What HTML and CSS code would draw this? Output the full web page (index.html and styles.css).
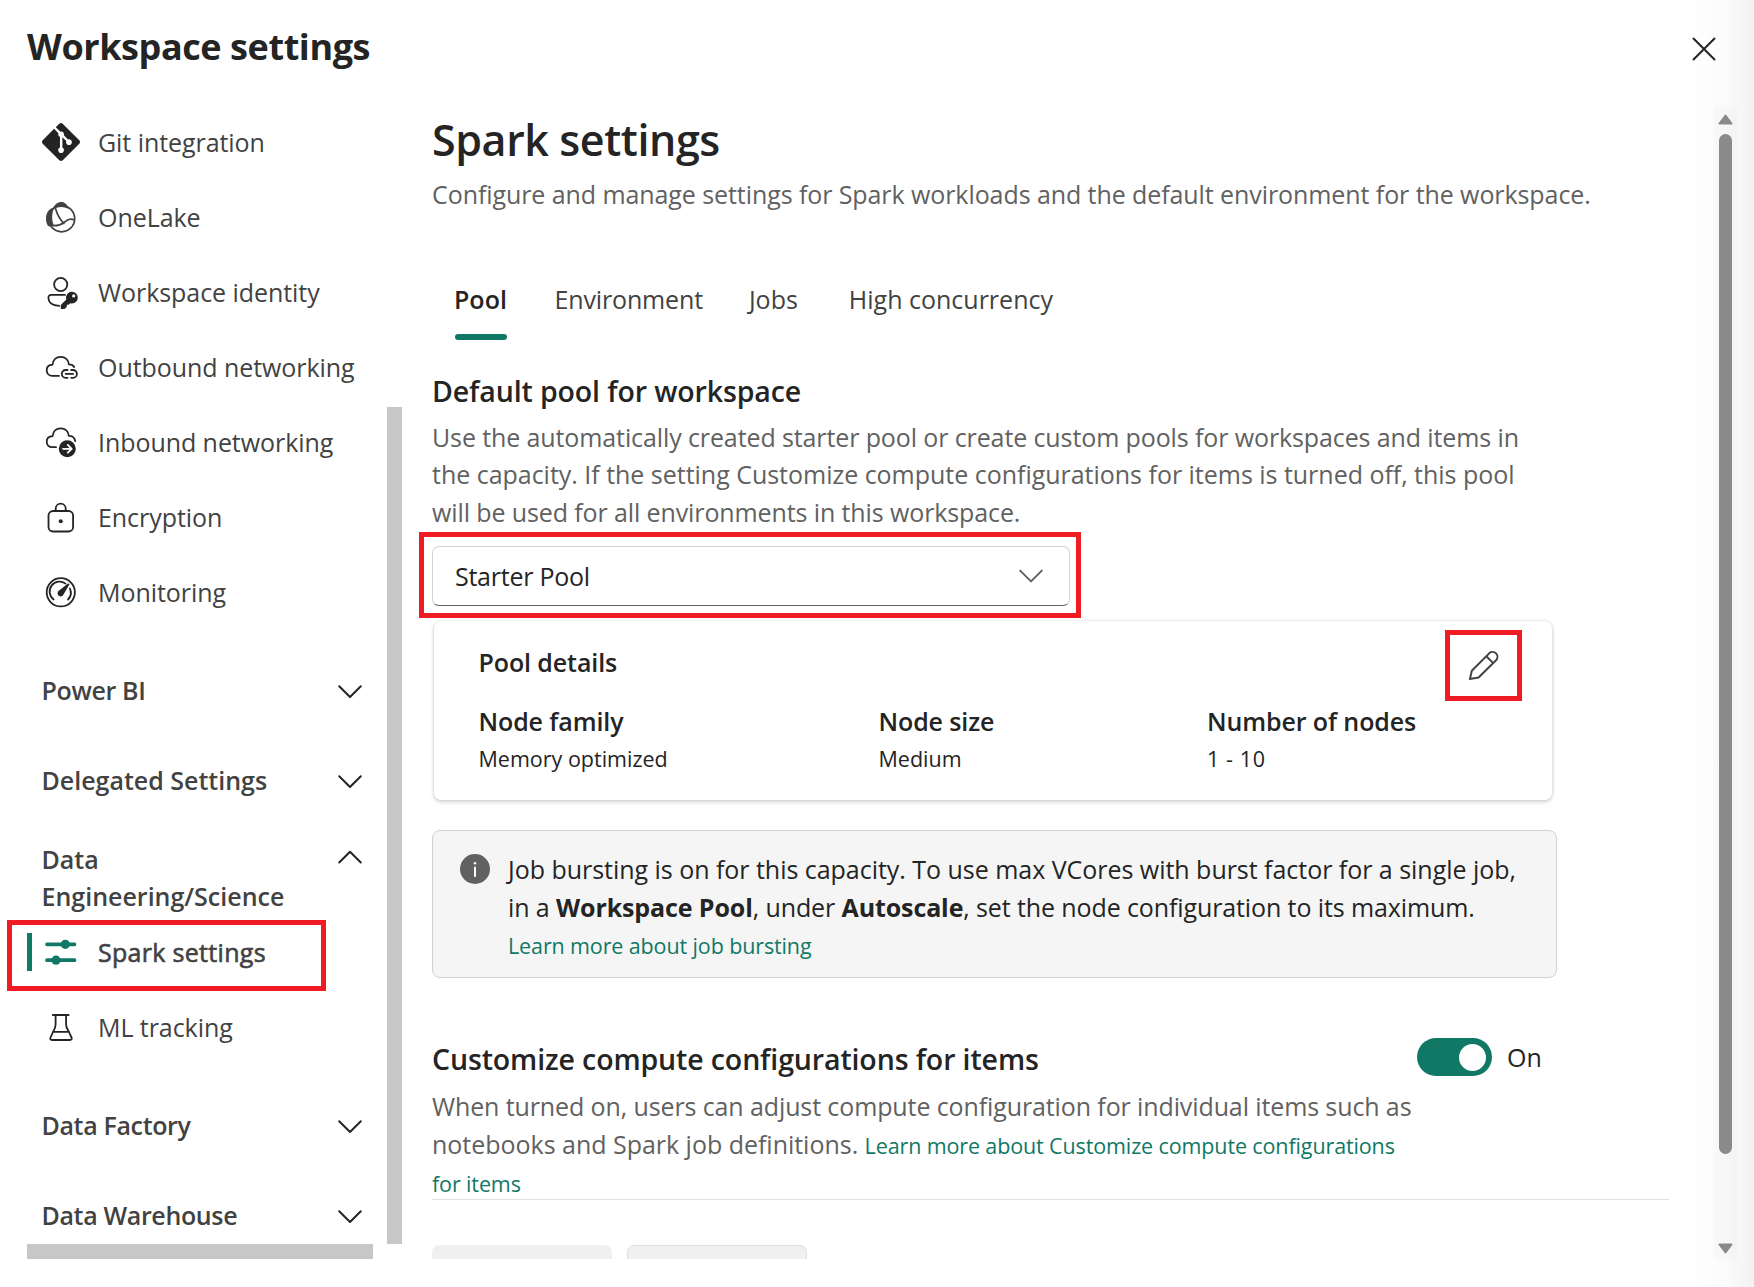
FILE: index.html
```html
<!DOCTYPE html>
<html lang="en">
<head>
<meta charset="utf-8">
<title>Workspace settings</title>
<link rel="stylesheet" href="styles.css">
</head>
<body>
<div class="panel">
  <header class="panel-header">
    <h1 class="panel-title">Workspace settings</h1>
    <svg class="close" viewBox="0 0 24 24"><path d="M1.5 1.5l21 21M22.5 1.5l-21 21"/></svg>
  </header>

  <div class="panel-body">
    <aside class="sidebar">
      <div class="nav-column">
        <nav class="nav">
          <a class="item"><svg class="icon git" viewBox="0 0 24 24"><path class="solid" d="M23.546 10.93L13.067.452c-.604-.603-1.582-.603-2.188 0L8.708 2.627l2.76 2.76c.645-.215 1.379-.07 1.889.441.516.515.658 1.258.438 1.9l2.658 2.66c.645-.223 1.387-.078 1.9.435.721.72.721 1.884 0 2.604-.719.719-1.881.719-2.6 0-.539-.541-.674-1.337-.404-1.996L12.86 8.955v6.525c.176.086.342.203.488.348.713.721.713 1.883 0 2.6-.719.721-1.889.721-2.609 0-.719-.719-.719-1.879 0-2.598.182-.18.387-.316.605-.406V8.835c-.217-.091-.424-.222-.6-.401-.545-.545-.676-1.342-.396-2.009L7.636 3.7.45 10.881c-.6.605-.6 1.584 0 2.189l10.48 10.477c.604.604 1.582.604 2.186 0l10.43-10.43c.605-.603.605-1.582 0-2.187"/></svg>Git integration</a>
          <a class="item"><svg class="icon lake" viewBox="0 0 38 38"><path class="fill" d="M11 9C13.5 4.5 16.5 3 19.5 3S25 5 27 10C22 7.5 16 7 11 10.5Z"/><path class="fill" d="M12.5 8.5C7 9 4 14 4 19.500C4 23.500 5 26 7 27.500L12 26.300C9.500 22 9.500 13.500 12.500 8.500Z"/><circle cx="19.600" cy="19.700" r="13.100"/><path d="M13.600 9.700C15.100 15.500 17.600 20 21.900 24.300M6.500 26C12 27.300 17.500 27 22 23.500C25.500 20.800 28 19 32.300 21"/></svg>OneLake</a>
          <a class="item"><svg class="icon" viewBox="0 0 38 38"><circle cx="18.700" cy="10.500" r="6.600"/><path d="M23 20.900H9.300C7.400 20.900 6.400 22 6.400 23.700C6.400 28.800 10.500 31.500 17.200 31.900"/><path class="solid" fill-rule="evenodd" d="M29.900 17.700a5.900 5.900 0 0 1 0 11.800c-.7 0-1.200-.1-1.800-.3l-1.500 1.500h-1.800v2l-2.300 2.400h-3.300l-.4-.4v-3.800l5.500-5.500a5.900 5.900 0 0 1 5.600-7.700Zm1.800 2.600a1.600 1.600 0 1 0 0 3.200a1.600 1.600 0 0 0 0-3.200Z"/></svg>Workspace identity</a>
          <a class="item"><svg class="icon" viewBox="0 0 38 38"><path d="M17 26.800H10.300C6.800 26.800 4.700 24.200 4.700 21.200C4.700 18.100 7 15.900 10.600 15.700C11 10.900 14.200 7.900 18.700 7.900S26.400 10.900 26.800 15.400C29.300 15.400 31.300 16.300 32.200 18"/><path d="M25.500 21H23.700a3.900 3.900 0 0 0 0 7.800h1.800M29.200 21h1.800a3.900 3.900 0 0 1 0 7.800h-1.800M23.700 24.900h7.400"/></svg>Outbound networking</a>
          <a class="item"><svg class="icon" viewBox="0 0 38 38"><path d="M14 23.200H10.300C6.800 23.200 4.700 20.600 4.700 17.600C4.700 14.500 7 12.300 10.600 12.100C11 7.300 14.200 4.300 18.700 4.300S26.400 7.300 26.800 11.800C30.500 11.800 32.600 13.500 33.200 17"/><circle class="solid" cx="25.300" cy="24.800" r="8.500"/><path class="knock" d="M21 24.800h8.400M25.800 20.900l3.900 3.900l-3.900 3.900"/></svg>Inbound networking</a>
          <a class="item"><svg class="icon" viewBox="0 0 38 38"><rect x="6.500" y="12" width="24.600" height="20.500" rx="4.500"/><path d="M13.700 12V9.600a5 5 0 0 1 10 0V12"/><circle class="solid" cx="18.700" cy="22.300" r="2"/></svg>Encryption</a>
          <a class="item"><svg class="icon" viewBox="0 0 38 38"><circle cx="18.800" cy="18.300" r="14.100"/><path d="M11.600 25.500A9.900 9.900 0 0 1 23.500 9.600M27.900 14.500A9.900 9.900 0 0 1 26 25.500"/><path class="solid" d="M26.800 9.500c.6.300.7.700.4 1.300L21.500 20.500A3.100 3.100 0 1 1 16.800 16.800L25.700 9.700c.4-.3.700-.4 1.100-.2Z"/></svg>Monitoring</a>

          <div class="group"><span class="tight">Power BI</span><svg class="chevron" viewBox="0 0 30 30"><path d="M4.200 10.200L15 21L25.800 10.200"/></svg></div>
          <div class="group"><span>Delegated Settings</span><svg class="chevron" viewBox="0 0 30 30"><path d="M4.200 10.200L15 21L25.800 10.200"/></svg></div>
          <div class="group group-open"><span>Data<br>Engineering/Science</span><svg class="chevron" viewBox="0 0 30 30"><path d="M4.200 19.500L15 8.700L25.800 19.500"/></svg></div>
          <a class="item active"><svg class="icon" viewBox="0 0 38 38"><path d="M5 10.300H32.500M5 26.200H32.500"/><circle cx="23.300" cy="10.300" r="4.600"/><circle cx="14" cy="26.200" r="4.600"/></svg>Spark settings<span class="callout callout-nav"></span></a>
          <a class="item"><svg class="icon" viewBox="0 0 38 38"><path d="M10.800 6H26.600M13.600 6V15.500C13.600 19 12.200 21 11 23L8.500 28.500C7.800 30 8.600 31 10 31H28C29.400 31 30.200 30 29.500 28.500L27 23C25.600 20.500 24.100 19 24.100 15.500V6M11 22.800H27"/></svg>ML tracking</a>
          <div class="group"><span class="tight">Data Factory</span><svg class="chevron" viewBox="0 0 30 30"><path d="M4.200 10.200L15 21L25.800 10.200"/></svg></div>
          <div class="group"><span class="tight">Data Warehouse</span><svg class="chevron" viewBox="0 0 30 30"><path d="M4.200 10.200L15 21L25.800 10.200"/></svg></div>
        </nav>
        <div class="h-thumb"></div>
      </div>
      <div class="v-thumb"></div>
    </aside>

    <main class="content">
      <h2 class="page-title">Spark settings</h2>
      <p class="text lead">Configure and manage settings for Spark workloads and the default environment for the workspace.</p>

      <div class="tabs">
        <span class="tab tab-active">Pool</span>
        <span class="tab tab-env">Environment</span>
        <span class="tab">Jobs</span>
        <span class="tab tab-last">High concurrency</span>
      </div>

      <h3 class="section-title">Default pool for workspace</h3>
      <p class="text pool-text">Use the automatically created starter pool or create custom pools for workspaces and items in<br><span class="loose">the capacity. If the setting Customize compute configurations for items is turned off, this pool</span><br>will be used for all environments in this workspace.</p>

      <div class="select">
        <span class="select-value">Starter Pool</span>
        <svg class="chevron" viewBox="0 0 30 30"><path d="M4.200 9.600L15 20.400L25.800 9.600"/></svg>
        <span class="callout callout-select"></span>
      </div>

      <section class="card">
        <div class="card-head">
          <h4 class="label">Pool details</h4>
          <span class="edit">
            <svg class="pencil" viewBox="0 0 34 34"><path d="M2.900 31.100L4.800 22.700L22.400 5.100a4.900 4.900 0 0 1 6.900 6.900L11.600 29.500ZM19.300 8.200L26.200 15.100"/></svg>
            <span class="callout callout-edit"></span>
          </span>
        </div>
        <div class="facts">
          <div><h4 class="label">Node family</h4><p class="value">Memory optimized</p></div>
          <div><h4 class="label">Node size</h4><p class="value">Medium</p></div>
          <div><h4 class="label">Number of nodes</h4><p class="value range">1 - 10</p></div>
        </div>
      </section>

      <section class="notice">
        <svg class="info" viewBox="0 0 30 30"><circle cx="15" cy="15" r="15"/><path d="M15 13.500V22"/><circle class="dot" cx="15" cy="9.300" r="1.300"/></svg>
        <p class="notice-text">Job bursting is on for this capacity. To use max VCores with burst factor for a single job,<br><span class="dense">in a <b>Workspace Pool</b>, under <b>Autoscale</b>, set the node configuration to its maximum.</span><br><a class="link">Learn more about job bursting</a></p>
      </section>

      <div class="setting-row">
        <h3 class="section-title">Customize compute configurations for items</h3>
        <span class="toggle"><span class="knob"></span></span>
        <span class="toggle-label">On</span>
      </div>
      <p class="text setting-text">When turned on, users can adjust compute configuration for individual items such as<br><span class="loose">notebooks and Spark job definitions.</span> <a class="link">Learn more about Customize compute configurations<br>for items</a></p>

      <div class="actions">
        <span class="button"></span>
        <span class="button button-outline"></span>
      </div>
    </main>

    <div class="scrollbar">
      <svg class="arrow" viewBox="0 0 15 11"><path d="M7.500 1.500L13.500 9.500H1.500Z"/></svg>
      <span class="thumb"></span>
      <svg class="arrow arrow-down" viewBox="0 0 15 11"><path d="M7.500 9.500L13.500 1.500H1.500Z"/></svg>
    </div>
  </div>
</div>
</body>
</html>
```
FILE: styles.css
```css
* { box-sizing: border-box; }
body, h1, h2, h3, h4, p { margin: 0; }

body {
  background: #fff;
  color: #242424;
  font-family: "Open Sans", "Noto Sans", sans-serif;
  font-size: 25px;
  line-height: 37.5px;
}

svg {
  display: block;
  flex: none;
  fill: none;
  stroke: #242424;
  stroke-linecap: round;
  stroke-linejoin: round;
}

.panel {
  display: flex;
  flex-direction: column;
  width: 1754px;
  height: 1287px;
  overflow: hidden;
  background: linear-gradient(to right, #fff 1690px, #fbfbfb 1725px, #f2f2f2 1754px);
}

.panel-header {
  display: flex;
  justify-content: space-between;
  height: 107px;
  padding: 20px 38px 0 27px;
}
.panel-title {
  font-size: 36px;
  font-weight: 700;
  line-height: 54px;
  letter-spacing: -0.42px;
}
.close { width: 24px; height: 24px; margin-top: 17px; stroke-width: 2; }

.panel-body { display: flex; height: 1152px; overflow: hidden; }

/* Left navigation */
.sidebar { display: flex; gap: 14px; width: 402px; flex: none; }
.nav-column { display: flex; flex-direction: column; width: 373px; }
.nav { height: 1137px; flex: none; padding-left: 27px; color: #424242; }
.nav > :first-child { margin-top: -2px; }
.item {
  position: relative;
  display: flex;
  align-items: center;
  gap: 18px;
  height: 75px;
  padding-left: 15px;
  letter-spacing: -0.06px;
}
.icon { width: 38px; height: 38px; stroke-width: 1.8; }
.git { margin-top: -2px; }
.solid { fill: #242424; stroke: none; }
.knock { stroke: #fff; }
.lake { stroke: #424242; stroke-width: 1.700; }
.lake .fill { fill: #424242; stroke: none; }
.active { font-weight: 500; -webkit-text-stroke: 0.6px #424242; letter-spacing: 0.3px; }
.active .icon { stroke: #117865; stroke-width: 3.7; }
.active circle { fill: #117865; stroke: none; }
.active::before {
  content: "";
  position: absolute;
  left: 0;
  top: 18px;
  width: 5px;
  height: 38px;
  background: #117865;
}
.group {
  display: flex;
  align-items: center;
  justify-content: space-between;
  height: 60px;
  margin-top: 30px;
  padding: 1px 8px 0 14.500px;
  font-weight: 600;
}
.tight { letter-spacing: -0.35px; }
.group-open { height: 75px; }
.group-open .chevron { align-self: flex-start; margin-top: 2px; }
.chevron { width: 30px; height: 30px; stroke-width: 2; }
.h-thumb { height: 15px; margin-left: 27px; background: #c7c7c7; }
.v-thumb { width: 15px; height: 837px; margin-top: 300px; background: #c7c7c7; }

/* Highlight frames */
.callout { position: absolute; border: 5px solid #ef1c24; }
.callout-nav { left: -20px; top: 5px; width: 319px; height: 71px; }
.callout-select { left: -14px; top: -15px; width: 662px; height: 86px; }
.callout-edit { left: -19px; top: -18.500px; width: 77px; height: 71px; }

/* Main content */
.content { width: 1237px; margin-left: 30px; flex: none; }
.page-title {
  margin-top: 3px;
  font-size: 43px;
  font-weight: 600;
  line-height: 60px;
  letter-spacing: -0.4px;
}
.text { color: #616161; white-space: nowrap; letter-spacing: -0.11px; }
.lead { margin-top: 6px; letter-spacing: -0.08px; }
.tabs { display: flex; gap: 46px; height: 60px; margin-top: 67px; padding-left: 22px; color: #424242; }
.tab-active { position: relative; width: 54.500px; color: #242424; font-weight: 600; }
.tab-env { letter-spacing: -0.15px; }
.tab-last { margin-left: 5px; }
.tab-active::after {
  content: "";
  position: absolute;
  left: 1px;
  top: 53px;
  width: 52px;
  height: 6px;
  border-radius: 3px;
  background: #117865;
}
.section-title {
  font-size: 28.500px;
  font-weight: 600;
  line-height: 41px;
  letter-spacing: -0.12px;
}
.tabs + .section-title { margin-top: 30px; }
.pool-text { margin-top: 7px; }
.loose { letter-spacing: -0.02px; }

.select {
  position: relative;
  display: flex;
  align-items: center;
  justify-content: space-between;
  width: 638px;
  height: 60px;
  margin-top: 15px;
  padding: 0 23px 0 22px;
  border: 1.500px solid #d1d1d1;
  border-bottom-color: #616161;
  border-radius: 7px;
  letter-spacing: -0.25px;
}
.select-value { padding-top: 2px; }
.select .chevron { stroke: #616161; }

.card {
  width: 1118px;
  height: 179px;
  margin: 15px 0 0 1.500px;
  padding: 23px 48px 0 45px;
  border-radius: 7px;
  background: #fff;
  box-shadow: 0 0 3px rgba(0, 0, 0, .13), 0 2px 4px rgba(0, 0, 0, .16);
}
.card-head { display: flex; align-items: center; justify-content: space-between; height: 37.500px; }
.edit {
  position: relative;
  display: flex;
  justify-content: center;
  width: 40px;
  height: 34px;
  margin-top: 5px;
}
.pencil { width: 34px; height: 34px; stroke: #424242; stroke-width: 2; }
.facts { display: grid; grid-template-columns: 400px 328.500px auto; margin-top: 21.500px; }
.label { font-size: 25px; font-weight: 600; letter-spacing: -0.1px; }
.value { font-size: 21.500px; line-height: 36px; }
.range { letter-spacing: 0.6px; }

.notice {
  display: flex;
  gap: 18px;
  width: 1125px;
  height: 148px;
  margin-top: 30px;
  padding: 20px 0 0 27px;
  border: 1px solid #d1d1d1;
  border-radius: 8px;
  background: #f5f5f5;
}
.info { width: 30px; height: 30px; margin-top: 3px; stroke: #fff; stroke-width: 2; }
.info circle { fill: #616161; stroke: none; }
.info .dot { fill: #fff; }
.notice-text { white-space: nowrap; letter-spacing: -0.03px; }
.dense { letter-spacing: -0.11px; }
.link { color: #117865; font-size: 21.500px; letter-spacing: -0.12px; }

.setting-row { display: flex; height: 38px; margin-top: 60px; }
.setting-row .section-title { width: 985px; padding-top: 1px; }
.toggle {
  display: flex;
  align-items: center;
  justify-content: flex-end;
  width: 75px;
  height: 38px;
  padding-right: 6px;
  border-radius: 19px;
  background: #117865;
}
.knob { width: 27px; height: 27px; border-radius: 50%; background: #fff; }
.toggle-label { margin-left: 15px; padding-top: 1px; }
.setting-text { height: 111px; margin-top: 12px; }

.actions { display: flex; gap: 15px; padding-top: 45px; border-top: 1px solid #e0e0e0; }
.button { width: 180px; height: 60px; border-radius: 7px; background: #f0f0f0; }
.button-outline { border: 1px solid #e0e0e0; }

.scrollbar {
  display: flex;
  flex-direction: column;
  align-items: center;
  width: 23px;
  margin-left: 45px;
  background: rgba(0, 0, 0, .015);
}
.arrow { width: 15px; height: 11px; margin-top: 7px; fill: #8a8a8a; stroke: #8a8a8a; stroke-width: 2; }
.thumb { width: 13px; height: 1020px; margin-top: 9px; border-radius: 7px; background: #8a8a8a; }
.arrow-down { margin-top: 89px; }
```
